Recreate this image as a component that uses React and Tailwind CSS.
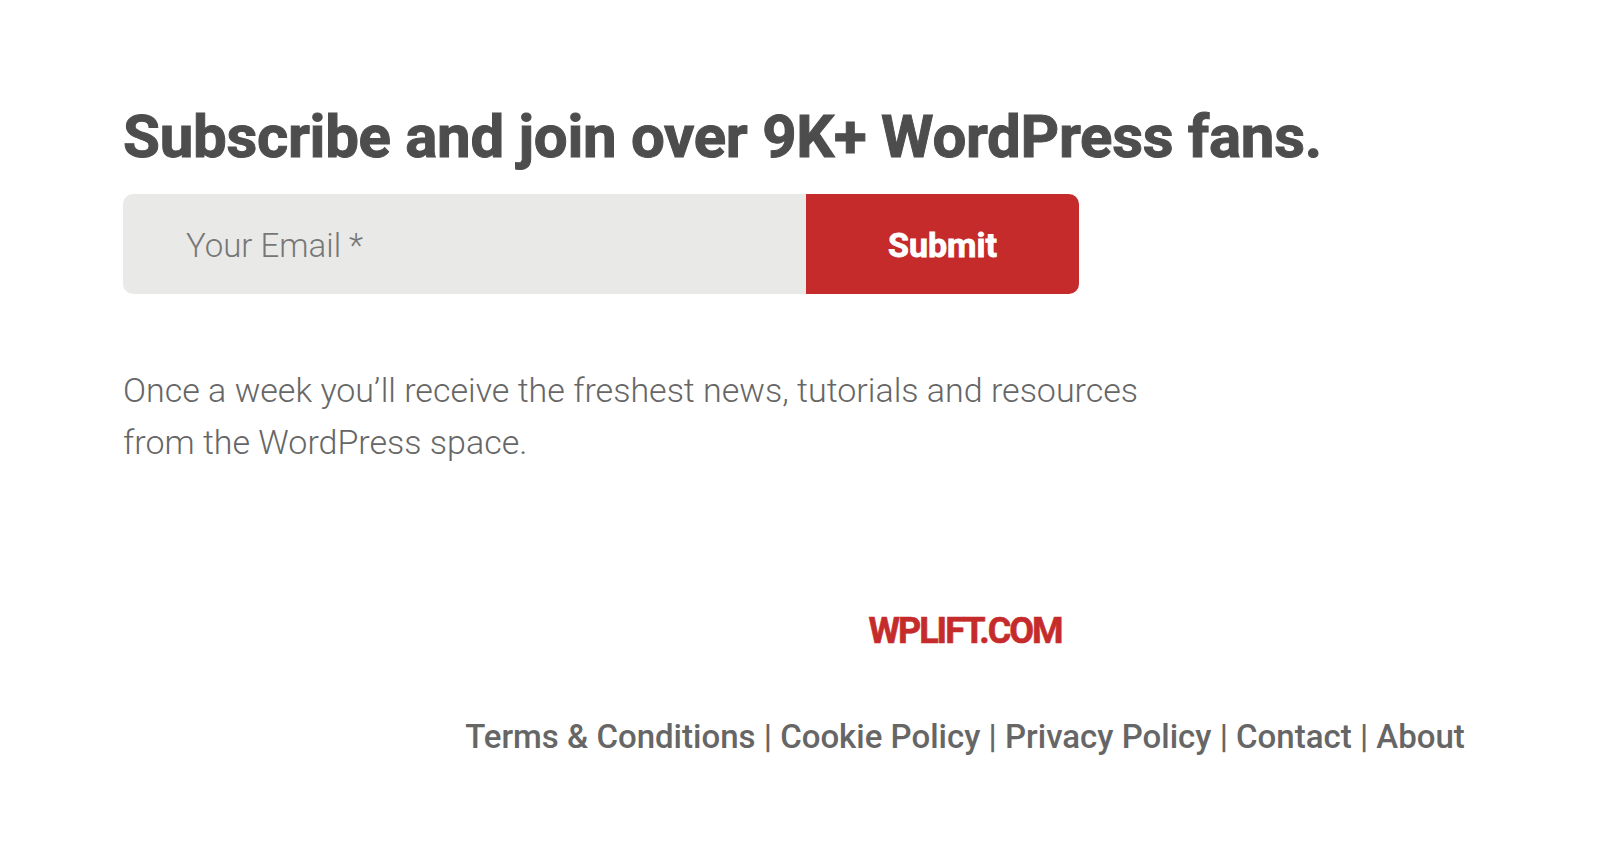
import React from "react";

export default function App() {
  return (
    <div className="w-[1600px] h-[848px] bg-white font-['Roboto',sans-serif] overflow-hidden">
      <div className="pl-[123px] pt-[102px]">
        <h2 className="text-[60px] leading-[70px] font-bold tracking-[-0.3px] text-[#4d4d4d] [-webkit-text-stroke:1px_#4d4d4d]">
          Subscribe and join over 9K+ WordPress fans.
        </h2>
        <form className="mt-[22px] flex w-[956px] h-[100px]" onSubmit={(e) => e.preventDefault()}>
          <div className="w-[683px] bg-[#e9e9e8] rounded-l-[10px] flex items-center pl-[63px] pt-[4px]">
            <input
              type="email"
              placeholder="Your Email *"
              className="w-full bg-transparent outline-none text-[33px] font-light text-[#555] placeholder:text-[#777]"
            />
          </div>
          <button
            type="submit"
            className="flex-1 bg-[#c62b2b] rounded-r-[10px] flex items-center justify-center pt-[3px] text-white font-bold text-[34px] [-webkit-text-stroke:0.8px_#ffffff]"
          >
            Submit
          </button>
        </form>
        <p className="mt-[70px] text-[34px] leading-[52px] font-light text-[#666] w-[1060px]">
          Once a week you’ll receive the freshest news, tutorials and resources from the WordPress space.
        </p>
      </div>
      <footer className="pl-[330px] flex flex-col items-center mt-[136px]">
        <a href="#" className="text-[36px] font-bold tracking-[-2px] text-[#c62b2b] [-webkit-text-stroke:0.6px_#c62b2b]">
          WPLIFT.COM
        </a>
        <nav className="mt-[54px] text-[33px] font-medium text-[#666]">
          <a href="#">Terms &amp; Conditions</a> | <a href="#">Cookie Policy</a> | <a href="#">Privacy Policy</a> |{" "}
          <a href="#">Contact</a> | <a href="#">About</a>
        </nav>
      </footer>
    </div>
  );
}
